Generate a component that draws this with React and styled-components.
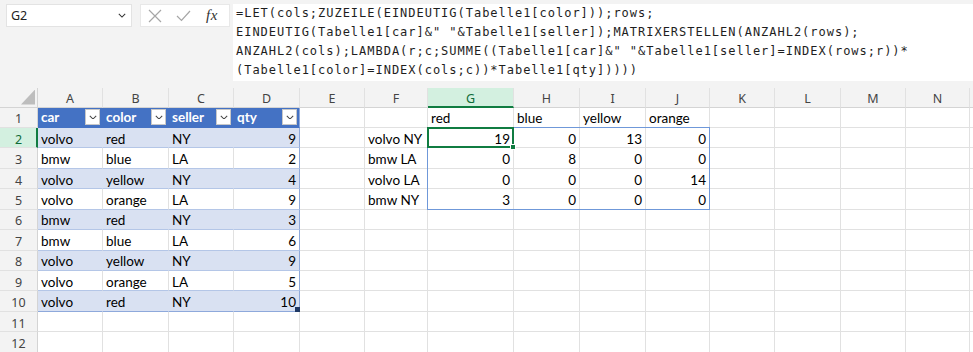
import styled, { createGlobalStyle } from "styled-components";

const GlobalStyle = createGlobalStyle`
  html, body {
    margin: 0;
    padding: 0;
    background: #f3f3f3;
    overflow: hidden;
  }
  * { box-sizing: border-box; }
`;

const GRID = "#e1e1e1";
const TABLE_LINE = "#b4c6e7";
const TABLE_EDGE = "#8ea9db";
const GREEN = "#107c41";

const widths = [65, 66, 65, 66, 65, 63, 86, 66, 66, 64, 65, 66, 65, 64];
const letters = ["A", "B", "C", "D", "E", "F", "G", "H", "I", "J", "K", "L", "M", "N", ""];

const cars = [
  ["volvo", "red", "NY", 9],
  ["bmw", "blue", "LA", 2],
  ["volvo", "yellow", "NY", 4],
  ["volvo", "orange", "LA", 9],
  ["bmw", "red", "NY", 3],
  ["bmw", "blue", "LA", 6],
  ["volvo", "yellow", "NY", 9],
  ["volvo", "orange", "LA", 5],
  ["volvo", "red", "NY", 10],
];

const colors = ["red", "blue", "yellow", "orange"];
const sellers = ["volvo NY", "bmw LA", "volvo LA", "bmw NY"];
const matrix = [
  [19, 0, 13, 0],
  [0, 8, 0, 0],
  [0, 0, 0, 14],
  [3, 0, 0, 0],
];

const formula = [
  "=LET(cols;ZUZEILE(EINDEUTIG(Tabelle1[color]));rows;",
  'EINDEUTIG(Tabelle1[car]&" "&Tabelle1[seller]);MATRIXERSTELLEN(ANZAHL2(rows);',
  'ANZAHL2(cols);LAMBDA(r;c;SUMME((Tabelle1[car]&" "&Tabelle1[seller]=INDEX(rows;r))*',
  "(Tabelle1[color]=INDEX(cols;c))*Tabelle1[qty]))))",
];

const Page = styled.div`
  width: 973px;
  height: 352px;
  overflow: hidden;
  background: #f3f3f3;
`;

const FormulaBar = styled.div`
  display: flex;
  align-items: flex-start;
  height: 88px;
  padding: 4px 0 0 6px;
`;

const NameBox = styled.div`
  width: 126px;
  height: 23px;
  background: #fff;
  border: 1px solid #e3e3e3;
  display: flex;
  align-items: center;
  justify-content: space-between;
  padding: 0 5px 0 4px;
  font: 12.5px "Noto Sans", sans-serif;
  color: #222;
`;

const IconBox = styled.div`
  margin-left: 8px;
  width: 90px;
  height: 23px;
  background: #fff;
  border: 1px solid #e8e8e8;
  display: flex;
  align-items: center;
  gap: 14px;
  padding: 0 0 0 7px;
`;

const Fx = styled.span`
  font: italic 15px "Liberation Serif", serif;
  color: #333;
  letter-spacing: 0.5px;
  margin-left: 1px;
`;

const FormulaBox = styled.div`
  margin-left: 3px;
  flex: 1;
  height: 77px;
  background: #fff;
  padding: 0 3px;
  font-family: "DejaVu Sans Mono", monospace;
  font-size: 12px;
  letter-spacing: 0.98px;
  line-height: 19px;
  color: #1e1e1e;
`;

const FormulaLine = styled.div`
  white-space: pre;
`;

const Sheet = styled.div`
  display: grid;
  grid-template-columns: 38px ${widths.map((w) => `${w}px`).join(" ")} 1fr;
  grid-template-rows: 19.5px repeat(13, 20.45px);
  background: #fff;
  height: 264px;
  overflow: hidden;
`;

const Corner = styled.div`
  grid-column: 1;
  grid-row: 1;
  background: #f3f3f3;
  border-right: 1px solid #d4d4d4;
  border-bottom: 1px solid #d4d4d4;
  display: flex;
  align-items: flex-end;
  justify-content: flex-end;
  padding: 0 2px 2px 0;
`;

const Triangle = styled.span`
  width: 14px;
  height: 15px;
  background: #bdbdbd;
  clip-path: polygon(100% 0, 100% 100%, 0 100%);
`;

const ColHead = styled.div`
  grid-column: ${(p) => p.$c};
  grid-row: 1;
  background: ${(p) => (p.$selected ? "#d3f0e0" : "#f3f3f3")};
  color: ${(p) => (p.$selected ? "#0e6b38" : "#444")};
  border-right: 1px solid ${GRID};
  border-bottom: ${(p) => (p.$selected ? `2px solid ${GREEN}` : "1px solid #d4d4d4")};
  font: 12.5px "Noto Sans", sans-serif;
  display: flex;
  align-items: center;
  justify-content: center;
  padding-top: 3px;
`;

const RowHead = styled.div`
  grid-column: 1;
  grid-row: ${(p) => p.$r};
  background: ${(p) => (p.$selected ? "#d3f0e0" : "#f3f3f3")};
  color: ${(p) => (p.$selected ? "#0e6b38" : "#444")};
  border-right: ${(p) => (p.$selected ? `2px solid ${GREEN}` : "1px solid #d4d4d4")};
  border-bottom: 1px solid ${GRID};
  font: 12.5px "Noto Sans", sans-serif;
  display: flex;
  align-items: center;
  justify-content: center;
  padding: 3px 0 0 ${(p) => (p.$selected ? "1px" : "0")};
`;

const kinds = {
  plain: { bg: "#fff", right: GRID, bottom: GRID, color: "#000" },
  thead: { bg: "#4472c4", right: "#4472c4", bottom: "#4472c4", color: "#fff" },
  band: { bg: "#d9e1f2", right: "#d9e1f2", bottom: TABLE_LINE, color: "#000" },
  tplain: { bg: "#fff", right: GRID, bottom: TABLE_LINE, color: "#000" },
};

const Cell = styled.div`
  position: relative;
  grid-column: ${(p) => p.$c};
  grid-row: ${(p) => p.$r};
  background: ${(p) => kinds[p.$kind].bg};
  color: ${(p) => kinds[p.$kind].color};
  font-weight: ${(p) => (p.$kind === "thead" ? 700 : 400)};
  border-right: 1px solid ${(p) => (p.$edge ? TABLE_EDGE : kinds[p.$kind].right)};
  border-bottom: 1px solid ${(p) => (p.$last ? TABLE_EDGE : kinds[p.$kind].bottom)};
  font-family: "Lato", "Liberation Sans", sans-serif;
  font-size: 13.5px;
  line-height: 1.2;
  white-space: nowrap;
  display: flex;
  align-items: ${(p) => (p.$kind === "thead" ? "center" : "flex-end")};
  justify-content: ${(p) => (p.$num ? "flex-end" : "space-between")};
  padding: 0 3px 0.5px 3px;
`;

const FilterButton = styled.span`
  width: 15px;
  height: 16px;
  margin-right: -1px;
  background: #fff;
  border: 1px solid #c8c8c8;
  display: flex;
  align-items: center;
  justify-content: center;
`;

const ResizeHandle = styled.span`
  position: absolute;
  right: -1px;
  bottom: -1px;
  width: 5px;
  height: 5px;
  background: #1f3864;
`;

const SpillBox = styled.div`
  grid-column: 8 / 12;
  grid-row: 3 / 7;
  margin: -1px 0 0 -1px;
  border: 1px solid #6f98d9;
  pointer-events: none;
  z-index: 1;
`;

const ActiveCell = styled.div`
  position: relative;
  grid-column: 8;
  grid-row: 3;
  margin: -1px 0 0 -1px;
  border: 2px solid ${GREEN};
  pointer-events: none;
  z-index: 2;
`;

const FillHandle = styled.span`
  position: absolute;
  right: -4px;
  bottom: -4px;
  width: 6px;
  height: 6px;
  background: ${GREEN};
  border: 1px solid #fff;
`;

const Chevron = ({ size = 8, color = "#444" }) => (
  <svg width={size} height={size * 0.6} viewBox="0 0 10 6">
    <polyline points="1,1 5,5 9,1" fill="none" stroke={color} strokeWidth="1.3" />
  </svg>
);

const cellFor = (r, c) => {
  // r: sheet row (1-based), c: column index (0 = A)
  if (c <= 3 && r >= 1 && r <= 10) {
    if (r === 1) {
      return { kind: "thead", text: ["car", "color", "seller", "qty"][c], filter: true, edge: c === 3 };
    }
    const row = cars[r - 2];
    return {
      kind: r % 2 === 0 ? "band" : "tplain",
      text: row[c],
      num: c === 3,
      edge: c === 3,
      last: r === 10,
      handle: r === 10 && c === 3,
    };
  }
  if (r === 1 && c >= 6 && c <= 9) return { kind: "plain", text: colors[c - 6] };
  if (r >= 2 && r <= 5 && c === 5) return { kind: "plain", text: sellers[r - 2] };
  if (r >= 2 && r <= 5 && c >= 6 && c <= 9) {
    return { kind: "plain", text: matrix[r - 2][c - 6], num: true };
  }
  return { kind: "plain", text: "" };
};

const rows = Array.from({ length: 13 }, (_, i) => i + 1);

export default function App() {
  return (
    <Page>
      <GlobalStyle />
      <FormulaBar>
        <NameBox>
          <span>G2</span>
          <Chevron size={8} color="#333" />
        </NameBox>
        <IconBox>
          <svg width="14" height="14" viewBox="0 0 14 14">
            <path d="M1 1 L13 13 M13 1 L1 13" stroke="#a6a6a6" strokeWidth="1.2" fill="none" />
          </svg>
          <svg width="15" height="12" viewBox="0 0 15 12">
            <polyline points="1,6 5.5,10.5 14,1" stroke="#a6a6a6" strokeWidth="1.2" fill="none" />
          </svg>
          <Fx>fx</Fx>
        </IconBox>
        <FormulaBox>
          {formula.map((line) => (
            <FormulaLine key={line}>{line}</FormulaLine>
          ))}
        </FormulaBox>
      </FormulaBar>
      <Sheet>
        <Corner>
          <Triangle />
        </Corner>
        {letters.map((l, i) => (
          <ColHead key={`h${i}`} $c={i + 2} $selected={l === "G"}>
            {l}
          </ColHead>
        ))}
        {rows.map((r) => (
          <RowHead key={`r${r}`} $r={r + 1} $selected={r === 2}>
            {r}
          </RowHead>
        ))}
        {rows.map((r) =>
          letters.map((_, c) => {
            const cell = cellFor(r, c);
            return (
              <Cell
                key={`${r}-${c}`}
                $r={r + 1}
                $c={c + 2}
                $kind={cell.kind}
                $num={cell.num}
                $edge={cell.edge}
                $last={cell.last}
              >
                <span>{cell.text}</span>
                {cell.filter && (
                  <FilterButton>
                    <Chevron size={8} color="#444" />
                  </FilterButton>
                )}
                {cell.handle && <ResizeHandle />}
              </Cell>
            );
          })
        )}
        <SpillBox />
        <ActiveCell>
          <FillHandle />
        </ActiveCell>
      </Sheet>
    </Page>
  );
}
